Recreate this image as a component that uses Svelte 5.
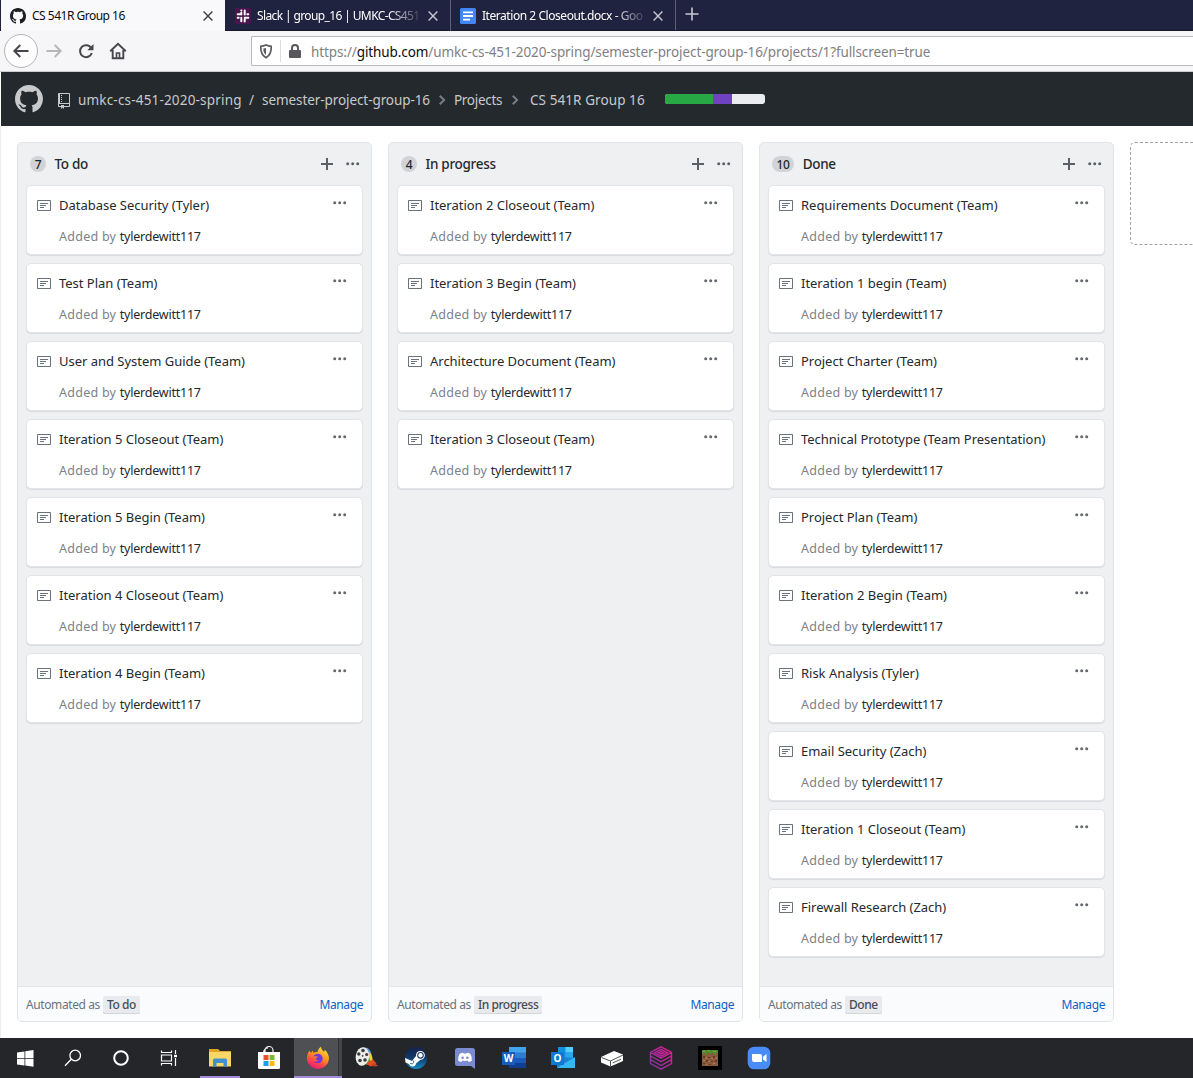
<script>
  const columns = [
    {
      name: 'To do',
      cards: [
        'Database Security (Tyler)',
        'Test Plan (Team)',
        'User and System Guide (Team)',
        'Iteration 5 Closeout (Team)',
        'Iteration 5 Begin (Team)',
        'Iteration 4 Closeout (Team)',
        'Iteration 4 Begin (Team)'
      ]
    },
    {
      name: 'In progress',
      cards: [
        'Iteration 2 Closeout (Team)',
        'Iteration 3 Begin (Team)',
        'Architecture Document (Team)',
        'Iteration 3 Closeout (Team)'
      ]
    },
    {
      name: 'Done',
      cards: [
        'Requirements Document (Team)',
        'Iteration 1 begin (Team)',
        'Project Charter (Team)',
        'Technical Prototype (Team Presentation)',
        'Project Plan (Team)',
        'Iteration 2 Begin (Team)',
        'Risk Analysis (Tyler)',
        'Email Security (Zach)',
        'Iteration 1 Closeout (Team)',
        'Firewall Research (Zach)'
      ]
    }
  ];
  const author = 'tylerdewitt117';
  const octocat =
    'M8 0C3.58 0 0 3.58 0 8c0 3.54 2.29 6.53 5.47 7.59.4.07.55-.17.55-.38 0-.19-.01-.82-.01-1.49-2.01.37-2.53-.49-2.69-.94-.09-.23-.48-.94-.82-1.13-.28-.15-.68-.52-.01-.53.63-.01 1.08.58 1.23.82.72 1.21 1.87.87 2.33.66.07-.52.28-.87.51-1.07-1.78-.2-3.64-.89-3.64-3.95 0-.87.31-1.59.82-2.15-.08-.2-.36-1.02.08-2.12 0 0 .67-.21 2.2.82.64-.18 1.32-.27 2-.27.68 0 1.36.09 2 .27 1.53-1.04 2.2-.82 2.2-.82.44 1.1.16 1.92.08 2.12.51.56.82 1.27.82 2.15 0 3.07-1.87 3.75-3.65 3.95.29.25.54.73.54 1.48 0 1.07-.01 1.93-.01 2.2 0 .21.15.46.55.38A8.013 8.013 0 0 0 16 8c0-4.42-3.58-8-8-8z';
</script>

{#snippet dots()}
  <svg class="dots" width="14" height="4" viewBox="0 0 14 4" fill="currentColor">
    <circle cx="1.7" cy="1.8" r="1.5" /><circle cx="6.7" cy="1.8" r="1.5" /><circle cx="11.700" cy="1.8" r="1.5" />
  </svg>
{/snippet}

{#snippet closeIcon()}
  <svg class="close" width="10" height="10" viewBox="0 0 10 10" fill="none" stroke="currentColor" stroke-width="1.4">
    <path d="M.6.6l8.8 8.8M9.4.6L.6 9.4" />
  </svg>
{/snippet}

{#snippet chevron()}
  <svg class="chevron" width="8" height="16" viewBox="0 0 8 16" fill="currentColor">
    <path d="M7.5 8l-5 5L1 11.5 4.75 8 1 4.5 2.5 3l5 5z" />
  </svg>
{/snippet}

<div class="screen">
  <div class="tabs">
    <div class="tab active">
      <svg width="16" height="16" viewBox="0 0 16 16" fill="#1b1f23"><path d={octocat} /></svg>
      <span class="title">CS 541R Group 16</span>
      {@render closeIcon()}
    </div>
    <div class="tab">
      <svg width="16" height="16" viewBox="0 0 16 16">
        <rect width="16" height="16" rx="1" fill="#4a154b" />
        <g stroke="#fff" stroke-width="2" stroke-linecap="round">
          <path d="M6.300 4.800v1.800M9.700 2.600v3.800M9.700 11.500v1.600M6.300 9.700v3.600M2.700 9.700h1M2.700 6.300h3.600M12.300 6.300h1M9.700 9.700h3.600M6.300 2.600h.1M9.600 13.400h.1" />
        </g>
      </svg>
      <span class="title fade slack">Slack | group_16 | UMKC-CS451</span>
      {@render closeIcon()}
    </div>
    <div class="tab divided">
      <svg width="16" height="16" viewBox="0 0 16 16">
        <rect width="16" height="16" rx="1.5" fill="#4285f4" />
        <path d="M3 4.300h10M3 8h10M3 11.700h7" stroke="#fff" stroke-width="1.800" />
      </svg>
      <span class="title fade docs">Iteration 2 Closeout.docx - Goo</span>
      {@render closeIcon()}
    </div>
    <div class="tab-end divided">
      <svg width="14" height="14" viewBox="0 0 14 14" stroke="#c6c7d3" stroke-width="1.600"><path d="M7 .5v13M.5 7h13" /></svg>
    </div>
  </div>

  <div class="toolbar">
    <div class="back">
      <svg width="16" height="14" viewBox="0 0 16 14" fill="none" stroke="#45454a" stroke-width="1.900"><path d="M15.500 7H1.500M7.300 1L1.300 7l6 6" /></svg>
    </div>
    <svg class="forward" width="16" height="14" viewBox="0 0 16 14" fill="none" stroke="#b6b6ba" stroke-width="1.900"><path d="M.5 7h14M8.700 1l6 6-6 6" /></svg>
    <svg class="reload" width="16" height="16" viewBox="0 0 16 16" fill="none" stroke="#48484c" stroke-width="2"><path d="M13.300 5.200A6 6 0 1 0 13.800 10" /><path d="M15.500 1v6.200H9.300z" fill="#48484c" stroke="none" /></svg>
    <svg class="home" width="18" height="18" viewBox="0 0 18 18" fill="none" stroke="#48484c" stroke-width="1.900"><path d="M1.200 9.200L9 1.700l7.800 7.500M3.700 8v8.200h10.600V8" /><path d="M7.500 16v-5h3v5" stroke-width="1.600" /></svg>
    <div class="urlbar">
      <svg class="shield" width="14" height="15" viewBox="0 0 14 15"><path d="M7 1c2 .8 3.700 1.200 5.200 1.300.3 5.500-1 9.200-5.200 11.400C2.800 11.500 1.500 7.800 1.800 2.300 3.300 2.200 5 1.800 7 1z" fill="none" stroke="#5a5a5e" stroke-width="1.700" /><path d="M7 4v7C5 9.600 4.300 7.500 4.300 4.600z" fill="#5a5a5e" /></svg>
      <span class="rule"></span>
      <svg class="lock" width="12" height="14" viewBox="0 0 12 14"><rect y="6" width="12" height="8" rx="1" fill="#58585c" /><path d="M3 6.500V4a3 3 0 0 1 6 0v2.500" fill="none" stroke="#58585c" stroke-width="2" /></svg>
      <span class="url">https://<b>github.com</b>/umkc-cs-451-2020-spring/semester-project-group-16/projects/1?fullscreen=true</span>
    </div>
  </div>

  <header>
    <svg class="mark" width="28" height="28" viewBox="0 0 16 16" fill="#c8c9ca"><path d={octocat} /></svg>
    <svg class="repo" width="12" height="16" viewBox="0 0 12 16" fill="#c8c9ca"><path d="M4 9H3V8h1v1zm0-3H3v1h1V6zm0-2H3v1h1V4zm0-2H3v1h1V2zm8-1v12c0 .55-.45 1-1 1H6v2l-1.500-1.500L3 16v-2H1c-.55 0-1-.45-1-1V1c0-.55.45-1 1-1h10c.55 0 1 .45 1 1zm-1 10H1v2h2v-1h3v1h5v-2zm0-10H2v9h9V1z" /></svg>
    <span class="crumb owner">umkc-cs-451-2020-spring</span>
    <span class="crumb slash">/</span>
    <span class="crumb project">semester-project-group-16</span>
    {@render chevron()}
    <span class="crumb section">Projects</span>
    {@render chevron()}
    <span class="crumb board-name">CS 541R Group 16</span>
    <div class="progress"><i class="green"></i><i class="purple"></i></div>
  </header>

  <main>
    {#each columns as column}
      <section class="column">
        <div class="column-head">
          <span class="count">{column.cards.length}</span>
          <h3>{column.name}</h3>
          <svg class="plus" width="12" height="16" viewBox="0 0 12 16" fill="currentColor"><path d="M12 9H7v5H5V9H0V7h5V2h2v5h5v2z" /></svg>
          {@render dots()}
        </div>
        <div class="cards">
          {#each column.cards as card}
            <article>
              <svg class="note" width="14" height="16" viewBox="0 0 14 16" fill="#6a737d"><path d="M3 10h4V9H3v1zm0-2h6V7H3v1zm0-2h8V5H3v1zm10 6H1V3h12v9zM1 2c-.55 0-1 .45-1 1v9c0 .55.45 1 1 1h12c.55 0 1-.45 1-1V3c0-.55-.45-1-1-1H1z" /></svg>
              <div class="body">
                <p class="name">{card}</p>
                <p class="by">Added by <b>{author}</b></p>
              </div>
              {@render dots()}
            </article>
          {/each}
        </div>
        <footer>
          <span class="auto">Automated as</span>
          <span class="label">{column.name}</span>
          <span class="manage">Manage</span>
        </footer>
      </section>
    {/each}
    <div class="add-column"></div>
  </main>

  <nav class="taskbar">
    <div class="slot small">
      <svg width="17" height="17" viewBox="0 0 17 17" fill="#fff"><path d="M0 2.500l7.500-1.100V8H0zM8.300 1.300L16.500 0v8H8.300zM0 8.800h7.500v6.600L0 14.400zM8.300 8.800h8.200V16.700l-8.200-1.200z" /></svg>
    </div>
    <div class="slot small">
      <svg width="18" height="18" viewBox="0 0 18 18" fill="none" stroke="#fff" stroke-width="1.300"><circle cx="11.200" cy="6.500" r="5.300" /><path d="M7.300 10.300L1 16.700" /></svg>
    </div>
    <div class="slot small">
      <svg width="18" height="18" viewBox="0 0 18 18" fill="none" stroke="#fff" stroke-width="2"><circle cx="9" cy="9" r="6.800" /></svg>
    </div>
    <div class="slot small">
      <svg width="18" height="18" viewBox="0 0 18 18" fill="none" stroke="#fff" stroke-width="1.200"><path d="M1.500 1.500v2h10v-2M1.500 16.500v-2h10v2M1.500 6h10v6h-10zM15.500 1v4M15.500 9v8" /><path d="M14 5.800h3v2.400h-3z" fill="#fff" stroke="none" /></svg>
    </div>
    <div class="slot open explorer">
      <svg width="24" height="24" viewBox="0 0 24 24"><path d="M1 3h9l2 2h11v15H1z" fill="#e2a52a" /><path d="M1 6h22v14.500H1z" fill="#fbd768" /><path d="M5 20.500V14q0-1.500 1.500-1.500h11Q19 12.500 19 14v6.500h-3.500V17h-7v3.500z" fill="#3f92cf" /></svg>
    </div>
    <div class="slot">
      <svg width="24" height="24" viewBox="0 0 24 24"><path d="M8 7V4.500a4 4 0 0 1 8 0V7M6.500 6.500C7 3.500 9 2 11 2" fill="none" stroke="#eee" stroke-width="1.200" /><path d="M1 6h22v15.500q0 1.500-1.500 1.500h-19Q1 23 1 21.500z" fill="#fff" /><path d="M6.500 9h5v5h-5z" fill="#e8502d" /><path d="M12.500 9h5v5h-5z" fill="#7db72f" /><path d="M6.500 15h5v5h-5z" fill="#1ba1e8" /><path d="M12.500 15h5v5h-5z" fill="#fdb813" /></svg>
    </div>
    <div class="slot open current">
      <svg width="24" height="24" viewBox="0 0 24 24">
        <defs><linearGradient id="fox" x1=".8" y1="0" x2=".3" y2="1"><stop offset="0" stop-color="#ffe642" /><stop offset=".4" stop-color="#ff9a1f" /><stop offset=".75" stop-color="#ff3f4d" /><stop offset="1" stop-color="#e31587" /></linearGradient></defs>
        <path d="M3.500 4.500c.3 1 .8 1.700 1.500 2.200l2-2.200.3 2.200c1.200-.5 2.500-.7 4-.5C12 4 13 2 15 .8c.2 2.200 1 3.200 3 5 .6-.5.8-1.200.8-2 2.700 2.500 4.200 5.500 4.200 9.200A11.200 11.200 0 0 1 .8 13.500C.700 10 1.600 7 3.500 4.500z" fill="url(#fox)" />
        <path d="M7.500 10.500c1-2.500 4-3.500 6.500-2.300 3 1.500 3.600 5.500 1.200 7.800-2 1.800-5.500 1.600-7.200-.8 2 .7 3.600.4 4.600-.9-2 .2-3-.7-2.600-2 .5-.8 1.500-.9 2.300-1.300-1.200-1-3-1-4.800-.5z" fill="#7139d6" />
      </svg>
    </div>
    <div class="slot">
      <svg width="24" height="24" viewBox="0 0 24 24">
        <path d="M9 1.500c5-.5 7 3 8 9l-3 4z" fill="#5b8ed6" /><path d="M14 6c3 2 3.500 6 4 10l-4.500 2z" fill="#e9cf3c" /><path d="M13 9l3 8-5 2z" fill="#5d9d34" />
        <ellipse cx="7.500" cy="10.500" rx="6.700" ry="9.300" fill="#ecece8" transform="rotate(8 7.500 10)" />
        <g fill="#3b3d3e"><circle cx="8" cy="4.500" r="1.800" /><circle cx="11.700" cy="8.500" r="1.600" /><circle cx="3.800" cy="8" r="1.700" /><circle cx="10" cy="14" r="1.800" /><circle cx="5" cy="14.500" r="1.800" /><circle cx="7.600" cy="9.800" r=".9" /></g>
        <path d="M13 16l5-2.500 3.500 4-5.500 3-4-2z" fill="#e54d20" /><path d="M19 17l4.500 3-4.500.5-2-1.500z" fill="#c7401c" />
      </svg>
    </div>
    <div class="slot">
      <svg width="24" height="24" viewBox="0 0 24 24">
        <defs><linearGradient id="steam" x1="0" y1="0" x2="0" y2="1"><stop offset="0" stop-color="#15204c" /><stop offset=".5" stop-color="#113a6b" /><stop offset="1" stop-color="#168cc4" /></linearGradient></defs>
        <circle cx="12" cy="12" r="11" fill="url(#steam)" />
        <path d="M1 12l7 3 4-5q0-5 4.500-5a4.300 4.300 0 0 1 0 8.700L12 17.500a3.600 3.600 0 0 1-7 .5l-3.500-1.600z" fill="#fff" />
        <circle cx="16.500" cy="9.300" r="2.800" fill="#fff" stroke="#173562" stroke-width="1.100" /><path d="M6 17.200q2.500 1.600 3.700-.5.500-1.800-1.200-2.600" fill="none" stroke="#234a75" stroke-width=".8" />
      </svg>
    </div>
    <div class="slot">
      <svg width="24" height="24" viewBox="0 0 24 24"><path d="M4.500 2h15q2.500 0 2.500 2.500V23l-4-3H4.500Q2 20 2 17.500v-13Q2 2 4.500 2z" fill="#7b8bd2" /><path d="M6.500 8Q8.300 6.800 10 6.700l.5.800h3l.5-.8q1.700.1 3.500 1.300 1.600 3.200 1.400 6.500-1.500 1.200-3.200 1.400l-1-1.300q-2.700.7-5.400 0l-1 1.300q-1.700-.2-3.200-1.400Q4.900 11.200 6.500 8z" fill="#fff" /><circle cx="9.600" cy="11.800" r="1.300" fill="#7b8bd2" /><circle cx="14.400" cy="11.800" r="1.300" fill="#7b8bd2" /></svg>
    </div>
    <div class="slot">
      <svg width="24" height="24" viewBox="0 0 24 24"><path d="M7 1h17v6H7z" fill="#41a5ee" /><path d="M7 6.500h17v5.500H7z" fill="#2b7cd3" /><path d="M7 12h17v5H7z" fill="#185abd" /><path d="M7 17h17v5H7z" fill="#103f91" /><path d="M0 6h13v13H0z" fill="#1a5cbe" /><text x="6.500" y="16.200" class="glyph">W</text></svg>
    </div>
    <div class="slot">
      <svg width="24" height="24" viewBox="0 0 24 24"><path d="M7 1h15v11H7z" fill="#1490df" /><path d="M14.500 1H22v5.500h-7.500z" fill="#50d0ff" /><path d="M14.500 6.500H22V12h-7.500z" fill="#28a8ea" /><path d="M6 11l18 1v10H6z" fill="#1c83cc" /><path d="M24 11v11H6z" fill="#35b8f1" /><path d="M0 6h13v13H0z" fill="#0f78d4" /><text x="6.500" y="16.200" class="glyph">O</text></svg>
    </div>
    <div class="slot">
      <svg width="24" height="24" viewBox="0 0 24 24"><path d="M1 11L14 5l9 3.500V15l-12.500 5.500L1 16.500z" fill="#fff" /><path d="M1.500 11.500l9 3.500L23 9M10.500 15v5.500M12.500 17l8.500-3.800" fill="none" stroke="#25272b" stroke-width=".8" /></svg>
    </div>
    <div class="slot">
      <svg width="24" height="24" viewBox="0 0 24 24" fill="none" stroke="url(#cube)" stroke-width="1.400">
        <defs><linearGradient id="cube" x1="1" y1="0" x2="0" y2="1"><stop offset="0" stop-color="#f01890" /><stop offset="1" stop-color="#743aa8" /></linearGradient></defs>
        <path d="M12 .8l10.500 5.700v11L12 23.200 1.500 17.500v-11zM1.500 6.500L12 12.200l10.500-5.700M1.500 10L12 15.700 22.500 10M1.500 13.700L12 19.500l10.500-5.800M12 3.300l6.500 3.500L12 10.200 5.500 6.800zM12 5.600l2.500 1.200L12 8 9.500 6.800z" />
      </svg>
    </div>
    <div class="slot">
      <svg width="24" height="24" viewBox="0 0 24 24" shape-rendering="crispEdges"><path d="M0 0h24v24H0z" fill="#000" /><path d="M4 4h16v16H4z" fill="#8a5a3c" /><path d="M4 4h16v3h-2v2h-2V7h-3v1h-2V7H9v2H7V7H6v1H4z" fill="#4f8a2c" /><path d="M5 5h2v1H5zM10 4h2v1h-2zM15 5h3v1h-3z" fill="#72b144" /><path d="M5 10h2v2H5zM10 11h2v1h-2zM15 10h2v2h-2zM8 14h2v2H8zM13 15h2v1h-2zM17 14h2v2h-2zM5 17h2v1H5zM11 18h2v1h-2z" fill="#623c26" /><path d="M8 11h1v2H8zM13 12h2v1h-2zM18 11h1v2h-1zM5 14h2v1H5zM10 15h2v1h-2zM15 17h2v1h-2zM8 18h1v1H8z" fill="#b57d56" /></svg>
    </div>
    <div class="slot">
      <svg width="24" height="24" viewBox="0 0 24 24"><rect x=".7" y=".7" width="22.600" height="22.600" rx="6.500" fill="#4a8cf7" /><path d="M5 8h8q2 0 2 2v6H7q-2 0-2-2zM16 10.700L19.500 8v8L16 13.400z" fill="#fff" /></svg>
    </div>
  </nav>
</div>

<style>
  :global(body) {
    background: #fff;
    overflow: hidden;
  }
  .screen {
    box-sizing: border-box;
    width: 1193px;
    height: 1078px;
    display: flex;
    flex-direction: column;
    overflow: hidden;
    font-family: 'Noto Sans', 'Open Sans', sans-serif;
    color: #24292e;
    background: #fff;
  }
  svg {
    display: block;
    flex: none;
  }
  p, h3 {
    margin: 0;
  }
  b {
    font-weight: 400;
  }

  .tabs {
    box-sizing: border-box;
    height: 31px;
    flex: none;
    display: flex;
    background: #20233f;
    border-bottom: 1px solid #15172b;
    padding-left: 1px;
  }
  .tab {
    box-sizing: border-box;
    width: 225px;
    height: 31px;
    display: flex;
    align-items: center;
    padding: 0 12px 0 10px;
    color: #fff;
    font-size: 12px;
  }
  .divided {
    border-left: 1px solid #5e6078;
  }
  .tab.divided {
    padding-left: 9px;
  }
  .tab.active {
    width: 224px;
    padding-left: 9px;
    background: #f9f9fb;
    color: #0c0c0d;
  }
  .title {
    flex: 1;
    margin: 0 8px 0 6px;
    white-space: nowrap;
    letter-spacing: -0.45px;
    line-height: 20px;
  }
  .slack {
    letter-spacing: -0.62px;
  }
  .active .title {
    letter-spacing: -0.5px;
  }
  .fade {
    mask-image: linear-gradient(to left, rgba(0, 0, 0, 0.1), #000 32px);
  }
  .close {
    color: #c6c7d3;
  }
  .active .close {
    color: #3e3e42;
  }
  .tab-end {
    padding: 7px 0 0 9px;
  }

  .toolbar {
    box-sizing: border-box;
    height: 41px;
    flex: none;
    display: flex;
    align-items: center;
    background: #f6f6f8;
    border-bottom: 1px solid #ccccce;
    padding-left: 4px;
  }
  .back {
    box-sizing: border-box;
    width: 34px;
    height: 34px;
    display: grid;
    place-items: center;
    border: 1px solid #b4b4b8;
    border-radius: 50%;
    background: #fdfdfe;
  }
  .forward {
    margin-left: 8px;
  }
  .reload {
    margin-left: 16px;
  }
  .home {
    margin-left: 15px;
  }
  .urlbar {
    box-sizing: border-box;
    height: 30px;
    flex: 1;
    display: flex;
    align-items: center;
    margin-left: 124px;
    padding-left: 7px;
    background: #fff;
    border: 1px solid #b9b9bc;
    border-right: 0;
    border-radius: 2px 0 0 2px;
  }
  .rule {
    width: 1px;
    height: 22px;
    margin: 0 8px 0 7px;
    background: #dcdcde;
  }
  .url {
    margin: 2px 0 0 10px;
    font-size: 13.500px;
    letter-spacing: -0.1px;
    color: #808084;
    white-space: nowrap;
  }
  .url b {
    color: #0c0c0d;
  }

  header {
    height: 54px;
    flex: none;
    display: flex;
    align-items: center;
    margin-left: 1px;
    padding-left: 14px;
    background: #24292e;
    color: #c8c9ca;
    font-size: 13.500px;
    white-space: nowrap;
  }
  .repo {
    margin: 3px 8px 0 15px;
  }
  .crumb {
    margin-top: 2px;
  }
  .owner { width: 163px; letter-spacing: 0.180px; }
  .slash { width: 13px; margin-left: 8px; }
  .project { width: 168px; letter-spacing: -0.080px; }
  .section { width: 49px; letter-spacing: -0.300px; }
  .board-name { width: 115px; margin-left: 3px; letter-spacing: 0.080px; }
  .chevron {
    margin: 2px 8px 0 8px;
    color: #777d83;
  }
  .progress {
    width: 100px;
    height: 10px;
    margin-left: 20px;
    display: flex;
    border-radius: 3px;
    overflow: hidden;
    background: #eaecef;
  }
  .green {
    width: 48%;
    background: #28a745;
  }
  .purple {
    width: 19%;
    background: #6f42c1;
  }

  main {
    height: 912px;
    flex: none;
    box-sizing: border-box;
    display: flex;
    gap: 16px;
    padding: 16px 0 16px 16px;
    border-left: 1px solid #ededf0;
  }
  .column {
    box-sizing: border-box;
    width: 355px;
    flex: none;
    display: flex;
    flex-direction: column;
    background: #eff0f2;
    border: 1px solid #e1e4e8;
    border-radius: 5px;
    overflow: hidden;
  }
  .column-head {
    height: 42px;
    flex: none;
    display: flex;
    align-items: center;
    padding: 0 11px 0 12px;
    color: #5a6066;
  }
  .count {
    box-sizing: border-box;
    min-width: 16px;
    height: 16px;
    padding: 0 4.500px;
    border-radius: 8px;
    background: #d1d3d6;
    color: #24292e;
    font-size: 12px;
    font-weight: 500;
    line-height: 17px;
    letter-spacing: -0.3px;
    text-align: center;
  }
  h3 {
    flex: 1;
    margin: 0 0 0 8.500px;
    font-size: 13.500px;
    font-weight: 500;
    letter-spacing: -0.3px;
    color: #24292e;
  }
  .plus {
    margin-right: 13px;
  }
  .cards {
    flex: 1;
    display: flex;
    flex-direction: column;
    gap: 8px;
    padding: 0 8px;
  }
  article {
    box-sizing: border-box;
    height: 70px;
    display: flex;
    padding: 8px 15px 0 10px;
    background: #fff;
    border: 1px solid #e1e4e8;
    border-radius: 5px;
    box-shadow: 0 1px 1px rgba(27, 31, 35, 0.1);
    color: #62686e;
  }
  .note {
    margin-top: 4px;
  }
  .body {
    flex: 1;
    margin-left: 8px;
    white-space: nowrap;
  }
  .name {
    height: 32px;
    font-size: 13px;
    line-height: 23px;
    letter-spacing: -0.02px;
    color: #24292e;
  }
  .by {
    font-size: 12.500px;
    line-height: 22px;
    letter-spacing: 0.260px;
    color: #7b8289;
  }
  .by b {
    letter-spacing: -0.220px;
    color: #24292e;
  }
  article .dots {
    margin-top: 7px;
  }
  footer {
    box-sizing: border-box;
    height: 35px;
    flex: none;
    display: flex;
    align-items: center;
    padding: 0 8px;
    background: #fafbfc;
    border-top: 1px solid #e1e4e8;
    font-size: 12px;
    letter-spacing: -0.400px;
    color: #6a737d;
    white-space: nowrap;
  }
  .auto, .manage {
    margin-top: 1px;
  }
  .label {
    margin: 1px 0 0 3px;
    padding: 0 4px;
    height: 18px;
    line-height: 18px;
    border-radius: 2px;
    background: #e8eaed;
    box-shadow: inset 0 -1px 0 #d3d6da;
    color: #444d56;
    font-weight: 500;
    letter-spacing: -0.450px;
  }
  .manage {
    margin-left: auto;
    color: #0c5fc9;
  }
  .add-column {
    box-sizing: border-box;
    flex: none;
    width: 355px;
    height: 103px;
    border: 1px dashed #a0a2a6;
    border-radius: 5px;
  }

  .taskbar {
    height: 40px;
    flex: none;
    display: flex;
    padding-left: 1px;
    background: #24262a;
  }
  .slot {
    box-sizing: border-box;
    width: 49px;
    flex: none;
    display: grid;
    place-items: center;
  }
  .small {
    width: 48px;
  }
  .explorer {
    margin-left: 2px;
  }
  .open {
    background: linear-gradient(#a58ad8, #a58ad8) center bottom / 40px 2px no-repeat;
  }
  .current {
    width: 48px;
    margin-left: 1px;
    background:
      linear-gradient(#a58ad8, #a58ad8) center bottom / 100% 2px no-repeat,
      linear-gradient(to right, #4e5054 44px, #2f3135 44px, #2f3135 45px, #434549 45px);
  }
  .current svg {
    margin-right: 1px;
  }
  .glyph {
    font: 700 10px 'Open Sans', sans-serif;
    fill: #fff;
    text-anchor: middle;
  }
</style>
